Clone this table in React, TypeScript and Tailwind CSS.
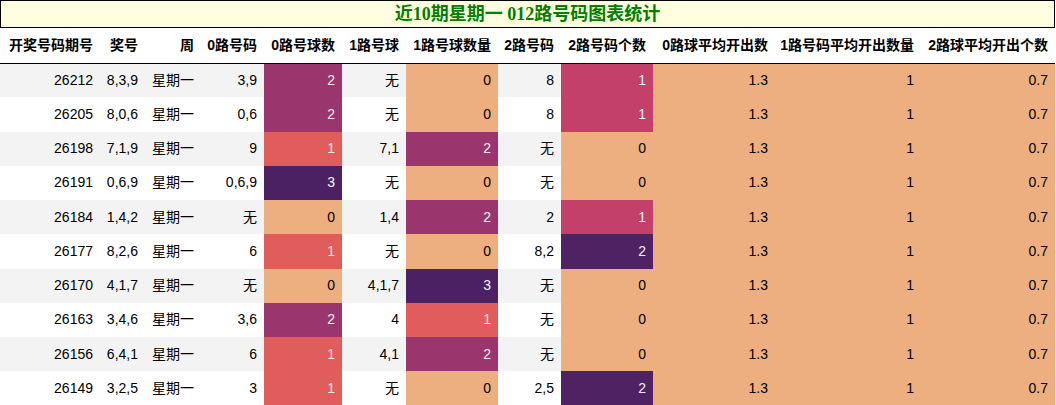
import React from "react";

const PEACH = "#edaf80";
const c3: Record<number, [string, boolean]> = {
  0: [PEACH, false],
  1: ["#e05d5c", true],
  2: ["#9a356e", true],
  3: ["#4b2163", true],
};
const c2: Record<number, [string, boolean]> = {
  0: [PEACH, false],
  1: ["#c3406a", true],
  2: ["#4e2263", true],
};

const rows: [string, string, string, string, number, string, number, string, number][] = [
  ["26212", "8,3,9", "星期一", "3,9", 2, "无", 0, "8", 1],
  ["26205", "8,0,6", "星期一", "0,6", 2, "无", 0, "8", 1],
  ["26198", "7,1,9", "星期一", "9", 1, "7,1", 2, "无", 0],
  ["26191", "0,6,9", "星期一", "0,6,9", 3, "无", 0, "无", 0],
  ["26184", "1,4,2", "星期一", "无", 0, "1,4", 2, "2", 1],
  ["26177", "8,2,6", "星期一", "6", 1, "无", 0, "8,2", 2],
  ["26170", "4,1,7", "星期一", "无", 0, "4,1,7", 3, "无", 0],
  ["26163", "3,4,6", "星期一", "3,6", 2, "4", 1, "无", 0],
  ["26156", "6,4,1", "星期一", "6", 1, "4,1", 2, "无", 0],
  ["26149", "3,2,5", "星期一", "3", 1, "无", 0, "2,5", 2],
];

const headers = [
  "开奖号码期号",
  "奖号",
  "周",
  "0路号码",
  "0路号球数",
  "1路号球",
  "1路号球数量",
  "2路号码",
  "2路号码个数",
  "0路球平均开出数",
  "1路号码平均开出数量",
  "2路球平均开出个数",
];
const widths = [100, 45, 56, 63, 78, 64, 92, 63, 92, 122, 146, 134];

function Colored({ v, map }: { v: number; map: Record<number, [string, boolean]> }) {
  const [bg, light] = map[v];
  return (
    <td
      className={`pr-[7px] text-right ${light ? "text-[#f1f1f1]" : "text-black"}`}
      style={{ backgroundColor: bg }}
    >
      {v}
    </td>
  );
}

export default function App() {
  return (
    <div className="w-[1056px] h-[405px] bg-white overflow-hidden font-['Liberation_Sans','Noto_Sans_CJK_SC',sans-serif] text-[14px] text-black">
      <div className="w-[1055px] h-[28px] border border-black bg-[#ffffe0] flex items-center justify-center">
        <span className="font-['Liberation_Serif','Noto_Sans_CJK_SC',serif] font-bold text-[18px] leading-none text-[#008000]">
          近10期星期一 012路号码图表统计
        </span>
      </div>
      <table className="w-[1055px] table-fixed border-collapse">
        <colgroup>
          {widths.map((w, i) => (
            <col key={i} style={{ width: w }} />
          ))}
        </colgroup>
        <thead>
          <tr className="border-b border-black">
            {headers.map((h) => (
              <th key={h} className="h-[35px] pr-[7px] text-right font-bold whitespace-nowrap">
                {h}
              </th>
            ))}
          </tr>
        </thead>
        <tbody>
          {rows.map((r, i) => (
            <tr key={r[0]} className={`h-[34.25px] ${i % 2 === 0 ? "bg-[#f3f3f3]" : "bg-white"}`}>
              <td className="pr-[7px] text-right">{r[0]}</td>
              <td className="pr-[7px] text-right">{r[1]}</td>
              <td className="pr-[7px] text-right">{r[2]}</td>
              <td className="pr-[7px] text-right">{r[3]}</td>
              <Colored v={r[4]} map={c3} />
              <td className="pr-[7px] text-right">{r[5]}</td>
              <Colored v={r[6]} map={c3} />
              <td className="pr-[7px] text-right">{r[7]}</td>
              <Colored v={r[8]} map={c2} />
              <td className="pr-[7px] text-right bg-[#edaf80]">1.3</td>
              <td className="pr-[7px] text-right bg-[#edaf80]">1</td>
              <td className="pr-[7px] text-right bg-[#edaf80]">0.7</td>
            </tr>
          ))}
        </tbody>
      </table>
    </div>
  );
}
